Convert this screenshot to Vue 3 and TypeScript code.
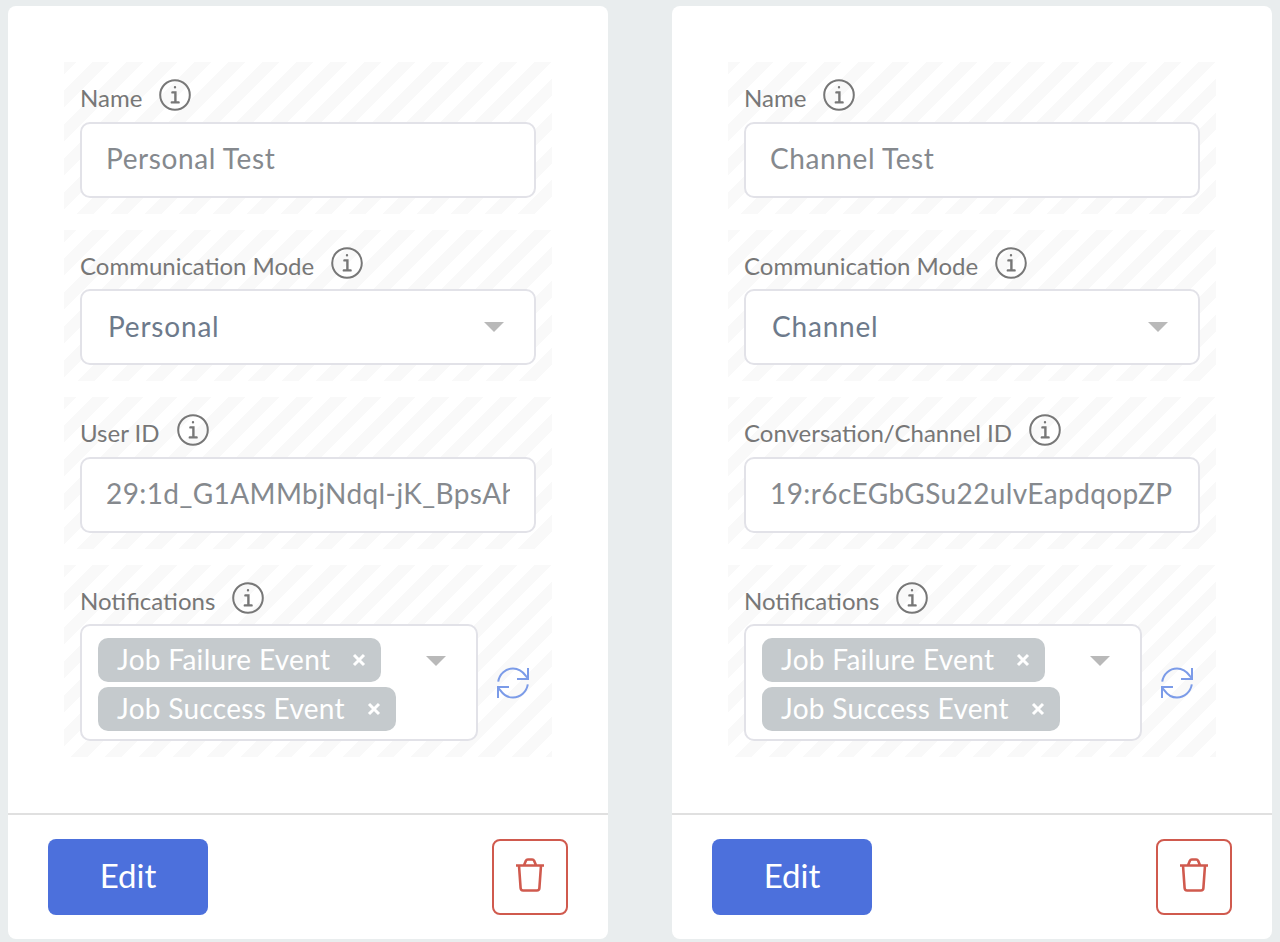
<script setup lang="ts">
interface CardData {
  name: string
  mode: string
  idLabel: string
  idValue: string
}
const cards: CardData[] = [
  { name: 'Personal Test', mode: 'Personal', idLabel: 'User ID', idValue: '29:1d_G1AMMbjNdql-jK_BpsAhQfLm2xZ7' },
  { name: 'Channel Test', mode: 'Channel', idLabel: 'Conversation/Channel ID', idValue: '19:r6cEGbGSu22ulvEapdqopZP' },
]
const tags = ['Job Failure Event', 'Job Success Event']
</script>

<template>
  <div class="page">
    <section v-for="card in cards" :key="card.name" class="card">
      <div class="body">
        <div class="field">
          <div class="label-row">
            <span class="label">Name</span>
            <svg class="info" viewBox="0 0 32 32"><circle cx="16" cy="16" r="14.8" /><path class="i" d="M16 8.200v.1M13.400 13.400H16.400V23M12.800 23.400H19.600" /></svg>
          </div>
          <input class="control text" readonly :value="card.name" />
        </div>
        <div class="field">
          <div class="label-row">
            <span class="label">Communication Mode</span>
            <svg class="info" viewBox="0 0 32 32"><circle cx="16" cy="16" r="14.8" /><path class="i" d="M16 8.200v.1M13.400 13.400H16.400V23M12.800 23.400H19.600" /></svg>
          </div>
          <div class="control select">
            <span class="select-text">{{ card.mode }}</span>
            <i class="arrow"></i>
          </div>
        </div>
        <div class="field">
          <div class="label-row">
            <span class="label">{{ card.idLabel }}</span>
            <svg class="info" viewBox="0 0 32 32"><circle cx="16" cy="16" r="14.8" /><path class="i" d="M16 8.200v.1M13.400 13.400H16.400V23M12.800 23.400H19.600" /></svg>
          </div>
          <input class="control text id" readonly :value="card.idValue" />
        </div>
        <div class="field">
          <div class="label-row">
            <span class="label">Notifications</span>
            <svg class="info" viewBox="0 0 32 32"><circle cx="16" cy="16" r="14.8" /><path class="i" d="M16 8.200v.1M13.400 13.400H16.400V23M12.800 23.400H19.600" /></svg>
          </div>
          <div class="multi-row">
            <div class="multi">
              <div class="tags">
                <span v-for="tag in tags" :key="tag" class="tag">
                  <span class="tag-text">{{ tag }}</span>
                  <svg class="x" viewBox="0 0 14 14"><path d="M2 2L12 12M12 2L2 12" /></svg>
                </span>
              </div>
              <i class="arrow multi-arrow"></i>
            </div>
            <svg class="refresh" viewBox="0 0 32 32">
              <path d="M1.200 14.600C2.400 7 8.600 1.400 16 1.400c5 0 9.400 2.600 12.600 7.200L31 11.400M30.800 17.400C29.600 25 23.400 30.600 16 30.600c-5 0-9.400-2.600-12.600-7.200L1 20.600" />
              <path d="M31 1v11H20M1 31V20h11" />
            </svg>
          </div>
        </div>
      </div>
      <footer class="footer">
        <button class="edit" type="button">Edit</button>
        <button class="trash" type="button" aria-label="Delete">
          <svg viewBox="0 0 32 36">
            <path d="M2 8.500H30M5 8.500L6.600 31c.1 1.600 1 2.500 2.500 2.500h13.800c1.500 0 2.400-.9 2.500-2.500L27 8.500M10 8.200L12 3.600c.3-.8 1-1.100 1.800-1.100h4.400c.8 0 1.500.3 1.800 1.100L22 8.200" />
          </svg>
        </button>
      </footer>
    </section>
  </div>
</template>

<style>
html, body { margin: 0; background: #e9edee; }
</style>

<style scoped>
.page {
  display: flex;
  gap: 64px;
  padding: 6px 0 0 8px;
  height: 942px;
  box-sizing: border-box;
  background: #e9edee;
  font-family: Lato, "Open Sans", sans-serif;
}
.card {
  width: 600px;
  height: 933px;
  background: #fff;
  border-radius: 8px;
  display: flex;
  flex-direction: column;
  box-sizing: border-box;
}
.body {
  flex: 1;
  padding: 56px 56px 0;
  display: flex;
  flex-direction: column;
  gap: 16px;
}
.field {
  padding: 16px;
  background: repeating-linear-gradient(135deg, #f9f9f9 0 8.5px, #fff 8.5px 20.5px, #f9f9f9 20.5px 24px);
}
.label-row {
  display: flex;
  align-items: flex-start;
  gap: 17px;
  height: 43.5px;
}
.label {
  font-size: 24px;
  line-height: 40px;
  color: #777;
}
.info {
  width: 32px;
  height: 32px;
  margin-top: 1px;
  fill: none;
  stroke: #777;
  stroke-width: 2;
}
.info .i { stroke-width: 2.4; stroke-linecap: round; }
.control {
  display: block;
  width: 100%;
  height: 76px;
  box-sizing: border-box;
  border: 2px solid #e2e2e8;
  border-radius: 10px;
  background: #fff;
  font-family: inherit;
  font-size: 28px;
  outline: none;
}
.text {
  padding: 0 24px 3px;
  color: #85898e;
  letter-spacing: 0.6px;
}
.text.id { letter-spacing: 0.4px; }
.select {
  display: flex;
  align-items: center;
  justify-content: space-between;
  padding: 0 30px 0 26px;
  color: #6d7a8b;
  letter-spacing: 0.8px;
}
.select-text { padding-bottom: 3px; }
.arrow {
  display: block;
  width: 0;
  height: 0;
  border-left: 10px solid transparent;
  border-right: 10px solid transparent;
  border-top: 10px solid #b9b9b9;
}
.multi-row {
  display: flex;
  align-items: center;
  gap: 19px;
}
.multi {
  width: 398px;
  height: 117px;
  box-sizing: border-box;
  border: 2px solid #e2e2e8;
  border-radius: 10px;
  background: #fff;
  padding: 12px 30px 0 16px;
  display: flex;
  justify-content: space-between;
}
.tags {
  display: flex;
  flex-direction: column;
  align-items: flex-start;
  gap: 5px;
}
.tag {
  height: 44px;
  box-sizing: border-box;
  display: flex;
  align-items: center;
  padding: 0 15px 0 19px;
  gap: 22px;
  background: #c5cacd;
  border-radius: 10px;
  color: #fff;
  font-size: 28px;
  letter-spacing: 0.3px;
}
.tag-text { padding-bottom: 3px; }
.x {
  width: 14px;
  height: 14px;
  fill: none;
  stroke: #fff;
  stroke-width: 3;
}
.multi-arrow { margin-top: 18px; }
.refresh {
  width: 32px;
  height: 32px;
  fill: none;
  stroke: #7b9be8;
  stroke-width: 2;
}
.footer {
  height: 126px;
  box-sizing: border-box;
  border-top: 2px solid #e0e0e0;
  padding: 24px 40px;
  display: flex;
  justify-content: space-between;
}
.edit {
  width: 160px;
  height: 76px;
  border: 0;
  border-radius: 8px;
  background: #4c70dc;
  color: #fff;
  font-family: inherit;
  font-size: 33px;
  padding: 0 0 5px;
}
.trash {
  width: 76px;
  height: 76px;
  box-sizing: border-box;
  border: 2px solid #d05a4e;
  border-radius: 8px;
  background: #fff;
  padding: 0 0 5px;
  display: flex;
  align-items: center;
  justify-content: center;
}
.trash svg {
  width: 32px;
  height: 36px;
  fill: none;
  stroke: #d05a4e;
  stroke-width: 2.6;
  stroke-linejoin: round;
}
</style>
